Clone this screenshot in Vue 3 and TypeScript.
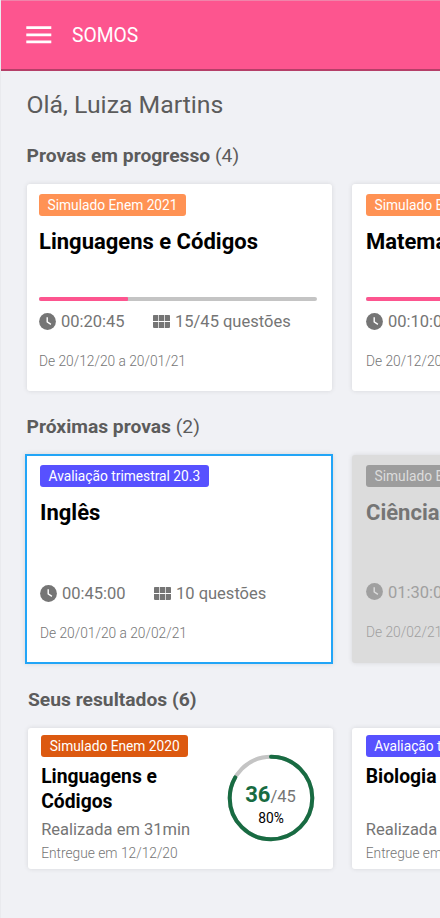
<script setup lang="ts">
interface Exam {
  tag: string
  tone: string
  title: string
  time: string
  questions: string
  period: string
  progress?: number
  state?: string
}

interface Result {
  tag: string
  tone: string
  title: string
  duration: string
  delivered: string
  score: number
  total: number
}

const inProgress: Exam[] = [
  { tag: 'Simulado Enem 2021', tone: 'orange', title: 'Linguagens e Códigos', time: '00:20:45', questions: '15/45 questões', period: 'De 20/12/20 a 20/01/21', progress: 32 },
  { tag: 'Simulado Enem 2021', tone: 'orange', title: 'Matematica', time: '00:10:00', questions: '30/45 questões', period: 'De 20/12/20 a 20/01/21', progress: 66 },
]

const upcoming: Exam[] = [
  { tag: 'Avaliação trimestral 20.3', tone: 'blue', title: 'Inglês', time: '00:45:00', questions: '10 questões', period: 'De 20/01/20 a 20/02/21', state: 'selected' },
  { tag: 'Simulado Enem 2021', tone: 'gray', title: 'Ciências da Natureza', time: '01:30:00', questions: '45 questões', period: 'De 20/02/21 a 20/03/21', state: 'disabled' },
]

const results: Result[] = [
  { tag: 'Simulado Enem 2020', tone: 'rust', title: 'Linguagens e Códigos', duration: 'Realizada em 31min', delivered: 'Entregue em 12/12/20', score: 36, total: 45 },
  { tag: 'Avaliação trimestral 20.3', tone: 'blue', title: 'Biologia', duration: 'Realizada em 31min', delivered: 'Entregue em 12/12/20', score: 36, total: 45 },
]

const percent = (r: Result): number => Math.round((r.score / r.total) * 100)
</script>

<template>
  <div class="screen">
    <header class="topbar">
      <svg class="menu" width="26" height="18" viewBox="0 0 26 18" aria-hidden="true">
        <path d="M.3 1.7h25M.3 8.8h25M.3 15.8h25" stroke="#fff" stroke-width="2.8" />
      </svg>
      <span class="brand">SOMOS</span>
    </header>

    <main>
      <h1 class="greeting">Olá, Luiza Martins</h1>

      <section class="progress-section">
        <h2 class="heading">Provas em progresso <span>(4)</span></h2>
        <div class="row">
          <article v-for="exam in inProgress" :key="exam.title" class="card exam">
            <span class="tag" :class="exam.tone">{{ exam.tag }}</span>
            <h3 class="title">{{ exam.title }}</h3>
            <div class="bar"><div class="fill" :style="{ width: exam.progress + '%' }"></div></div>
            <div class="meta">
              <svg class="clock" width="17" height="17" viewBox="0 0 17 17" aria-hidden="true">
                <circle cx="8.5" cy="8.5" r="8.4" fill="currentColor" />
                <path class="hands" d="M8.2 4.2v4.7l3.7 2.4" fill="none" stroke-width="1.4" />
              </svg>
              <span class="time">{{ exam.time }}</span>
              <svg class="grid" width="17" height="13" viewBox="0 0 17 13" fill="currentColor" aria-hidden="true">
                <path d="M.8 0H5.2v6H0V.8Q0 0 .8 0ZM5.9 0h5.2v6H5.9ZM11.8 0h4.4q.8 0 .8.8V6h-5.2ZM0 6.9h5.2v6H.8Q0 12.9 0 12.1ZM5.9 6.9h5.2v6H5.9ZM11.8 6.9H17v5.2q0 .8-.8.8h-4.4Z" />
              </svg>
              <span class="count">{{ exam.questions }}</span>
            </div>
            <p class="period">{{ exam.period }}</p>
          </article>
        </div>
      </section>

      <section class="upcoming-section">
        <h2 class="heading">Próximas provas <span>(2)</span></h2>
        <div class="row">
          <article v-for="exam in upcoming" :key="exam.title" class="card exam" :class="exam.state">
            <span class="tag" :class="exam.tone">{{ exam.tag }}</span>
            <h3 class="title">{{ exam.title }}</h3>
            <div class="meta">
              <svg class="clock" width="17" height="17" viewBox="0 0 17 17" aria-hidden="true">
                <circle cx="8.5" cy="8.5" r="8.4" fill="currentColor" />
                <path class="hands" d="M8.2 4.2v4.7l3.7 2.4" fill="none" stroke-width="1.4" />
              </svg>
              <span class="time">{{ exam.time }}</span>
              <svg class="grid" width="17" height="13" viewBox="0 0 17 13" fill="currentColor" aria-hidden="true">
                <path d="M.8 0H5.2v6H0V.8Q0 0 .8 0ZM5.9 0h5.2v6H5.9ZM11.8 0h4.4q.8 0 .8.8V6h-5.2ZM0 6.9h5.2v6H.8Q0 12.9 0 12.1ZM5.9 6.9h5.2v6H5.9ZM11.8 6.9H17v5.2q0 .8-.8.8h-4.4Z" />
              </svg>
              <span class="count">{{ exam.questions }}</span>
            </div>
            <p class="period">{{ exam.period }}</p>
          </article>
        </div>
      </section>

      <section class="results-section">
        <h2 class="heading">Seus resultados (6)</h2>
        <div class="row">
          <article v-for="result in results" :key="result.title" class="card result">
            <div class="summary">
              <span class="tag" :class="result.tone">{{ result.tag }}</span>
              <h3 class="result-title">{{ result.title }}</h3>
              <p class="duration">{{ result.duration }}</p>
              <p class="delivered">{{ result.delivered }}</p>
            </div>
            <div class="gauge">
              <svg width="88" height="88" viewBox="0 0 88 88" aria-hidden="true">
                <circle cx="44" cy="44" r="41.3" fill="none" stroke="#c4c4c4" stroke-width="4" />
                <circle cx="44" cy="44" r="41.3" fill="none" stroke="#186b42" stroke-width="4" stroke-linecap="round" pathLength="100" stroke-dasharray="83.3 100" transform="rotate(-90 44 44)" />
              </svg>
              <div class="score">
                <div class="points"><b>{{ result.score }}</b>/{{ result.total }}</div>
                <div class="percent">{{ percent(result) }}%</div>
              </div>
            </div>
          </article>
        </div>
      </section>
    </main>
  </div>
</template>

<style>
body {
  background: #f0f1f5;
}
</style>

<style scoped>
.screen {
  box-sizing: border-box;
  width: 440px;
  height: 918px;
  overflow: hidden;
  background: #f0f1f5;
  border-left: 1px solid #e9eaee;
  font-family: Roboto, "Liberation Sans", sans-serif;
  color: #757575;
}
h1, h2, h3, p {
  margin: 0;
}
.topbar {
  box-sizing: border-box;
  display: flex;
  align-items: center;
  height: 71px;
  margin-left: -1px;
  padding: 0 0 1px 26px;
  background: #fd558f;
  border-top: 1px solid #f084aa;
  border-left: 1px solid #f77ba6;
  border-bottom: 2px solid #b53f68;
}
.menu {
  margin-left: -1px;
}
.brand {
  margin-left: 20px;
  padding-top: 2px;
  font-size: 19.3px;
  line-height: 24px;
  color: #fff;
}
.greeting {
  padding: 18px 0 0 25.5px;
  font-size: 24.8px;
  line-height: 32px;
  font-weight: 400;
  color: #5c5c5c;
}
.heading {
  padding-left: 25.5px;
  font-size: 19.25px;
  line-height: 24px;
  font-weight: 700;
  color: #5c5c5c;
}
.heading span {
  font-weight: 400;
}
.row {
  display: flex;
  gap: 20px;
  padding-left: 25.5px;
}
.card {
  box-sizing: border-box;
  flex: none;
  width: 305.5px;
  background: #fff;
  border-radius: 3px;
  box-shadow: 0 0 5px rgba(0, 0, 0, .11);
}
.progress-section {
  padding-top: 23.4px;
}
.progress-section .row {
  padding-top: 16.1px;
}
.exam {
  height: 206.5px;
  padding: 9.7px 15.5px 0 12.5px;
}
.exam + .exam {
  padding-left: 14px;
}
.tag {
  display: block;
  width: max-content;
  padding: 0 8.5px;
  border-radius: 3px;
  font-size: 13.75px;
  line-height: 22px;
  color: #fff;
}
.orange { background: #ff9254; }
.blue { background: #5751ff; }
.rust { background: #dc5910; }
.gray { background: #9d9d9d; color: #dcdcdc; }
.title {
  margin-top: 12px;
  font-size: 22px;
  line-height: 28px;
  font-weight: 700;
  color: #000;
  white-space: nowrap;
}
.bar {
  height: 4px;
  margin-top: 41px;
  overflow: hidden;
  border-radius: 2px;
  background: #c4c4c4;
}
.fill {
  height: 4px;
  border-radius: 0 1px 1px 0;
  background: #fd558f;
}
.meta {
  display: flex;
  align-items: center;
  height: 20px;
  margin-top: 11.3px;
  font-size: 16.5px;
  line-height: 20px;
  white-space: nowrap;
}
.clock {
  flex: none;
  margin-top: -2px;
}
.hands {
  stroke: #fff;
}
.time {
  width: 92px;
  margin-left: 5px;
}
.grid {
  flex: none;
  margin-top: -1px;
}
.count {
  margin-left: 5px;
}
.period {
  margin-top: 19.7px;
  font-size: 13.75px;
  line-height: 18px;
  font-weight: 300;
}
.upcoming-section {
  padding-top: 24px;
}
.upcoming-section .row {
  align-items: center;
  gap: 19px;
  padding: 15px 0 0 24px;
}
.upcoming-section .card {
  height: 207.5px;
}
.upcoming-section .meta {
  margin-top: 57.5px;
}
.upcoming-section .selected {
  width: 308px;
  height: 210px;
  border: 2px solid #22a5f7;
  border-radius: 0;
  padding: 9px 13px 0;
}
.upcoming-section .disabled .meta {
  margin-top: 56px;
}
.disabled {
  background: #dcdcdc;
  color: #a0a0a0;
}
.disabled .title {
  color: #757575;
}
.disabled .hands {
  stroke: #dcdcdc;
}
.results-section {
  padding-top: 24px;
}
.results-section .heading {
  padding-left: 27px;
}
.results-section .row {
  gap: 19px;
  padding: 16px 0 0 26.5px;
}
.result {
  display: flex;
  justify-content: space-between;
  width: 305px;
  height: 141.5px;
  padding: 7px 18px 0 13.7px;
}
.result + .result {
  padding-left: 14.3px;
}
.summary {
  width: 160px;
}
.result-title {
  height: 50px;
  margin-top: 7px;
  font-size: 19.3px;
  line-height: 25px;
  font-weight: 700;
  color: #000;
}
.duration {
  margin-top: 6px;
  font-size: 16.5px;
  line-height: 20px;
}
.delivered {
  margin-top: 4px;
  font-size: 13.75px;
  line-height: 18px;
  font-weight: 300;
}
.gauge {
  display: grid;
  height: 88px;
  margin-top: 19px;
}
.gauge > * {
  grid-area: 1 / 1;
}
.score {
  padding-top: 29px;
  text-align: center;
}
.points {
  font-size: 16.5px;
  line-height: 24px;
}
.points b {
  font-size: 22px;
  color: #186b42;
}
.percent {
  margin-top: -1px;
  padding-left: 1px;
  font-size: 13.75px;
  line-height: 20px;
  color: #000;
}
</style>
